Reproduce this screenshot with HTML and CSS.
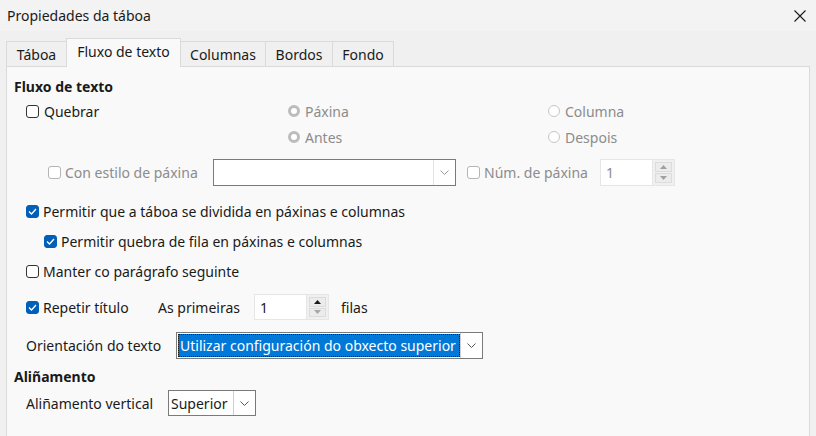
FILE: index.html
```html
<!DOCTYPE html>
<html lang="gl">
<head>
  <meta charset="UTF-8" />
  <title>Propiedades da táboa</title>
  <link rel="stylesheet" href="styles.css">
</head>
<body>
  <div class="titlebar">
    <span class="title">Propiedades da táboa</span>
    <svg class="close" width="12" height="12" viewBox="0 0 12 12"><path d="M0.5 0.5L11.5 11.5M11.5 0.5L0.5 11.5" stroke="#1a1a1a" stroke-width="1.1"/></svg>
  </div>

  <div class="tabs">
    <div class="tab w-taboa">Táboa</div>
    <div class="tab active w-fluxo">Fluxo de texto</div>
    <div class="tab w-col">Columnas</div>
    <div class="tab w-bor">Bordos</div>
    <div class="tab w-fon">Fondo</div>
  </div>

  <div class="panel">
    <div class="heading h-first">Fluxo de texto</div>

    <div class="break-grid">
      <div class="row"><span class="cb"></span><span>Quebrar</span></div>
      <div class="row dis"><span class="rb sel"></span><span>Páxina</span></div>
      <div class="row dis"><span class="rb"></span><span>Columna</span></div>
      <div class="row"></div>
      <div class="row dis"><span class="rb sel"></span><span>Antes</span></div>
      <div class="row dis"><span class="rb"></span><span>Despois</span></div>
    </div>

    <div class="row style-row">
      <span class="cb dis"></span>
      <span class="dis lbl-style">Con estilo de páxina</span>
      <div class="select sel-style">
        <span class="sel-text"></span>
        <span class="sel-arrow light"><svg width="9" height="5" viewBox="0 0 9 5"><path d="M0.5 0.5L4.5 4.5L8.5 0.5" fill="none" stroke="#9a9a9a"/></svg></span>
      </div>
      <span class="cb dis"></span>
      <span class="dis lbl-num">Núm. de páxina</span>
      <div class="spin">
        <span class="spin-field dis-field">1</span>
        <span class="spin-btns">
          <span class="spin-btn"><svg width="7" height="4" viewBox="0 0 7 4"><path d="M0 4L3.5 0L7 4Z" fill="#a0a0a0"/></svg></span>
          <span class="spin-btn"><svg width="7" height="4" viewBox="0 0 7 4"><path d="M0 0L3.5 4L7 0Z" fill="#a0a0a0"/></svg></span>
        </span>
      </div>
    </div>

    <div class="row indent r-split"><span class="cb on"><svg width="9" height="7" viewBox="0 0 9 7"><path d="M1 3.5L3.5 6L8 1" fill="none" stroke="#fff" stroke-width="1.3"/></svg></span><span>Permitir que a táboa se dividida en páxinas e columnas</span></div>
    <div class="row indent2 r-next"><span class="cb on"><svg width="9" height="7" viewBox="0 0 9 7"><path d="M1 3.5L3.5 6L8 1" fill="none" stroke="#fff" stroke-width="1.3"/></svg></span><span>Permitir quebra de fila en páxinas e columnas</span></div>
    <div class="row indent r-next"><span class="cb"></span><span>Manter co parágrafo seguinte</span></div>

    <div class="row indent r-repeat">
      <span class="cb on"><svg width="9" height="7" viewBox="0 0 9 7"><path d="M1 3.5L3.5 6L8 1" fill="none" stroke="#fff" stroke-width="1.3"/></svg></span>
      <span class="lbl-rep">Repetir título</span>
      <span class="lbl-first">As primeiras</span>
      <div class="spin">
        <span class="spin-field">1</span>
        <span class="spin-btns">
          <span class="spin-btn"><svg width="7" height="4" viewBox="0 0 7 4"><path d="M0 4L3.5 0L7 4Z" fill="#1a1a1a"/></svg></span>
          <span class="spin-btn"><svg width="7" height="4" viewBox="0 0 7 4"><path d="M0 0L3.5 4L7 0Z" fill="#a8a8a8"/></svg></span>
        </span>
      </div>
      <span class="lbl-rows">filas</span>
    </div>

    <div class="row indent r-orient">
      <span class="lbl-orient">Orientación do texto</span>
      <div class="select sel-orient">
        <span class="sel-text focus">Utilizar configuración do obxecto superior</span>
        <span class="sel-arrow"><svg width="9" height="5" viewBox="0 0 9 5"><path d="M0.5 0.5L4.5 4.5L8.5 0.5" fill="none" stroke="#555"/></svg></span>
      </div>
    </div>

    <div class="heading h-align">Aliñamento</div>

    <div class="row indent r-valign">
      <span class="lbl-valign">Aliñamento vertical</span>
      <div class="select sel-valign">
        <span class="sel-text">Superior</span>
        <span class="sel-arrow"><svg width="9" height="5" viewBox="0 0 9 5"><path d="M0.5 0.5L4.5 4.5L8.5 0.5" fill="none" stroke="#555"/></svg></span>
      </div>
    </div>
  </div>
</body>
</html>
```

FILE: styles.css
```css
* { box-sizing: border-box; }
body {
  margin: 0;
  width: 816px;
  height: 436px;
  overflow: hidden;
  font-family: "Noto Sans", "Open Sans", sans-serif;
  font-size: 14px;
  color: #1a1a1a;
  background: #f0f0f0;
}
.titlebar {
  height: 31px;
  background: #f3f3f3;
  display: flex;
  align-items: center;
  justify-content: space-between;
  padding: 0 10px 0 7px;
}
.close { display: block; }

.tabs {
  height: 35px;
  display: flex;
  align-items: flex-end;
  padding-left: 6px;
}
.tab {
  height: 25px;
  border: 1px solid #dadada;
  border-bottom: none;
  margin-right: -1px;
  background: #f0f0f0;
  display: flex;
  align-items: center;
  justify-content: center;
  padding-top: 1px;
}
.tab.active {
  height: 29px;
  margin-bottom: -1px;
  background: #f9f9f9;
  position: relative;
  z-index: 1;
  padding-top: 0;
  padding-bottom: 3px;
}
.w-taboa { width: 61px; }
.w-fluxo { width: 115px; }
.w-col { width: 86px; }
.w-bor { width: 68px; }
.w-fon { width: 62px; }

.panel {
  margin: 0 6px;
  height: 380px;
  border: 1px solid #dadada;
  background: #f9f9f9;
  padding-left: 7px;
}
.heading {
  height: 24px;
  display: flex;
  align-items: center;
  font-weight: bold;
}
.h-first { margin-top: 7px; }
.h-align { margin-top: 5px; }

.row {
  height: 26px;
  display: flex;
  align-items: center;
}
.dis { color: #8c8c8c; }

.break-grid {
  display: grid;
  grid-template-columns: 262px 260px 200px;
  padding-left: 12px;
}
.break-grid .row span:last-child { margin-left: 5px; }

.indent { padding-left: 12px; }
.indent2 { padding-left: 30px; }
.indent .cb + span, .indent2 .cb + span { margin-left: 4px; }

.cb {
  width: 13px;
  height: 13px;
  flex: none;
  border: 1px solid #333;
  border-radius: 3px;
  background: #fff;
  display: flex;
  align-items: center;
  justify-content: center;
}
.cb.on { background: #005fb8; border-color: #005fb8; }
.cb.dis { border-color: #b4b4b4; }

.rb {
  width: 12px;
  height: 12px;
  flex: none;
  border-radius: 50%;
  border: 1px solid #c6c6c6;
  background: #fff;
}
.rb.sel { border: 3.5px solid #bcbcbc; }

.style-row {
  height: 27px;
  margin-top: 9px;
  padding-left: 34px;
}
.lbl-style { width: 148px; margin-left: 4px; }
.lbl-num { width: 116px; margin-left: 4px; }
.sel-style { width: 243px; margin-right: 11px; border-color: #8c8c8c; }

.select {
  height: 100%;
  display: flex;
  border: 1px solid #7a7a7a;
  background: #fff;
}
.sel-text {
  flex: 1;
  display: flex;
  align-items: center;
  padding-left: 2px;
  white-space: nowrap;
}
.sel-text.focus {
  background: #0078d7;
  color: #fff;
  outline: 1px dotted #1a1a1a;
  outline-offset: -1px;
  margin: 1px 0 1px 1px;
}
.sel-arrow {
  width: 22px;
  border-left: 1px solid #cfcfcf;
  display: flex;
  align-items: center;
  justify-content: center;
}
.sel-arrow.light { border-left-color: #e2e2e2; }

.spin {
  height: 100%;
  display: flex;
}
.spin-field {
  width: 53px;
  background: #fff;
  border: 1px solid #e6e6e6;
  display: flex;
  align-items: center;
  padding-left: 5px;
}
.dis-field { color: #8c8c8c; }
.spin-btns {
  width: 22px;
  background: #f0f0f0;
  border: 1px solid #e6e6e6;
  border-left: none;
  padding: 2px;
  display: flex;
  flex-direction: column;
  gap: 1px;
}
.spin-btn {
  flex: 1;
  border: 1px solid #dcdcdc;
  background: #ececec;
  display: flex;
  align-items: center;
  justify-content: center;
}

.r-split { margin-top: 12px; }
.r-next { margin-top: 4px; }
.r-repeat { margin-top: 10px; }
.lbl-rep { width: 115px; }
.lbl-first { width: 96px; }
.lbl-rows { margin-left: 12px; }

.r-orient { height: 27px; margin-top: 12px; }
.lbl-orient { width: 150px; }
.sel-orient { width: 307px; }

.r-valign { margin-top: 2px; }
.lbl-valign { width: 142px; }
.sel-valign { width: 88px; }
```
